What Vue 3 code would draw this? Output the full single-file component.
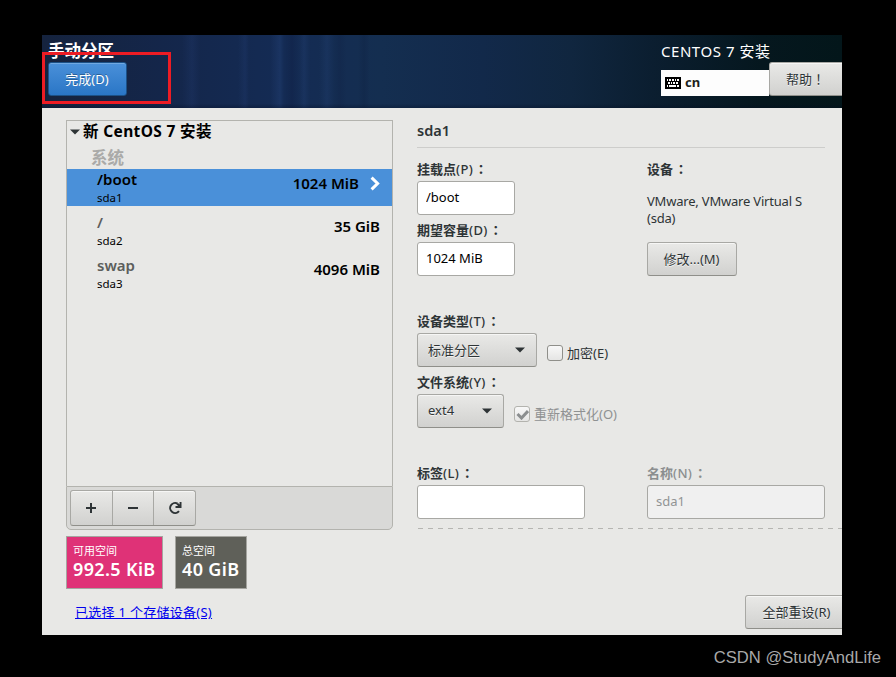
<script setup>
import { ref } from 'vue'

const partitions = [
  { mount: '/boot', device: 'sda1', size: '1024 MiB' },
  { mount: '/', device: 'sda2', size: '35 GiB' },
  { mount: 'swap', device: 'sda3', size: '4096 MiB' },
]

const selected = ref('sda1')
const mountPoint = ref('/boot')
const capacity = ref('1024 MiB')
const label = ref('')
const encrypt = ref(false)
</script>

<template>
  <div class="screen">
    <div class="window">
      <header class="header">
        <div class="header-left">
          <h1>手动分区</h1>
          <button class="btn primary" type="button">完成(D)</button>
        </div>
        <div class="header-right">
          <div class="product">CENTOS 7 安装</div>
          <div class="header-tools">
            <div class="keyboard">
              <svg width="16" height="12" viewBox="0 0 16 12" shape-rendering="crispEdges">
                <rect width="16" height="12" rx="1" fill="#000" />
                <path
                  d="M2 2h1v2h-1zM4 2h2v2h-2zM7 2h2v2h-2zM10 2h1v2h-1zM12 2h2v2h-2zM3 5h2v2h-2zM6 5h1v2h-1zM8 5h2v2h-2zM11 5h2v2h-2zM2 8h1v2h-1zM4 8h7v2h-7zM12 8h2v2h-2z"
                  fill="#fff"
                />
              </svg>
              <span>cn</span>
            </div>
            <button class="btn help" type="button">帮助<span class="wide">！</span></button>
          </div>
        </div>
        <!-- Highlight around the done button -->
        <div class="marker"></div>
      </header>

      <main class="body">
        <section class="left">
          <div class="tree">
            <div class="tree-title">
              <svg width="10" height="6" viewBox="0 0 10 6"><path d="M0 .5h10L5 5.5z" fill="#2e3436" /></svg>
              <span>新 CentOS 7 安装</span>
            </div>
            <div class="group">系统</div>
            <div
              v-for="p in partitions"
              :key="p.device"
              class="row"
              :class="{ active: p.device === selected }"
              @click="selected = p.device"
            >
              <div class="row-name">
                <strong>{{ p.mount }}</strong>
                <small>{{ p.device }}</small>
              </div>
              <div class="row-size">{{ p.size }}</div>
              <svg v-if="p.device === selected" class="chevron" width="10" height="15" viewBox="0 0 10 15">
                <path d="M1.6 1.6L7.6 7.5L1.6 13.4" fill="none" stroke="#fff" stroke-width="3" />
              </svg>
            </div>
          </div>
          <div class="toolbar">
            <div class="tool-group">
              <button type="button" aria-label="添加">
                <svg width="12" height="12" viewBox="0 0 12 12"><path d="M1 6h10M6 1v10" stroke="#2e3436" stroke-width="2" /></svg>
              </button>
              <button type="button" aria-label="删除">
                <svg width="12" height="12" viewBox="0 0 12 12"><path d="M1 6h10" stroke="#2e3436" stroke-width="2" /></svg>
              </button>
              <button type="button" aria-label="刷新">
                <svg width="14" height="14" viewBox="0 0 14 14">
                  <path d="M9.6 2.6A5 5 0 1 0 11 10.2" fill="none" stroke="#2e3436" stroke-width="2" />
                  <path d="M13.5 1v6H7.5V5h2.6L8.6 3.4 10 2l1.6 1.5V1z" fill="#2e3436" />
                </svg>
              </button>
            </div>
          </div>

          <div class="spaces">
            <div class="space available">
              <span>可用空间</span>
              <strong>992.5 KiB</strong>
            </div>
            <div class="space total">
              <span>总空间</span>
              <strong>40 GiB</strong>
            </div>
          </div>
          <a class="storage">已选择 1 个存储设备(S)</a>
        </section>

        <section class="right">
          <h2>sda1</h2>
          <div class="details">
            <div class="col main-col">
              <label>挂载点<i>(P)</i><span class="wide">：</span></label>
              <input v-model="mountPoint" class="w98" type="text" />
              <label>期望容量<i>(D)</i><span class="wide">：</span></label>
              <input v-model="capacity" class="w98" type="text" />
              <label class="spaced">设备类型<i>(T)</i><span class="wide">：</span></label>
              <div class="line">
                <button class="btn combo w120" type="button">
                  <span>标准分区</span>
                  <svg width="10" height="6" viewBox="0 0 10 6"><path d="M0 .5h10L5 5.5z" fill="#2e3436" /></svg>
                </button>
                <div class="check" @click="encrypt = !encrypt">
                  <span class="box">
                    <svg v-if="encrypt" width="13" height="11" viewBox="0 0 13 11"><path d="M1.5 5l4 4L12 2" fill="none" stroke="#2e3436" stroke-width="3" /></svg>
                  </span>
                  <span class="check-text">加密(E)</span>
                </div>
              </div>
              <label>文件系统<i>(Y)</i><span class="wide">：</span></label>
              <div class="line">
                <button class="btn combo w87" type="button">
                  <span>ext4</span>
                  <svg width="10" height="6" viewBox="0 0 10 6"><path d="M0 .5h10L5 5.5z" fill="#2e3436" /></svg>
                </button>
                <div class="check disabled">
                  <span class="box">
                    <svg width="13" height="11" viewBox="0 0 13 11"><path d="M1.5 5l4 4L12 2" fill="none" stroke="#8b8e8f" stroke-width="3" /></svg>
                  </span>
                  <span class="check-text">重新格式化(O)</span>
                </div>
              </div>
              <label class="spaced">标签<i>(L)</i><span class="wide">：</span></label>
              <input v-model="label" class="w168" type="text" />
            </div>
            <div class="col">
              <label>设备<span class="wide">：</span></label>
              <p class="device">VMware, VMware Virtual S<br />(sda)</p>
              <button class="btn w90" type="button">修改...(M)</button>
              <label class="name-label">名称<i>(N)</i><span class="wide">：</span></label>
              <input class="w178" type="text" value="sda1" disabled />
            </div>
          </div>
          <div class="dashes"></div>
          <button class="btn reset" type="button">全部重设(R)</button>
        </section>
      </main>
    </div>
    <footer class="credit">CSDN @StudyAndLife</footer>
  </div>
</template>

<style>
body {
  margin: 0;
  background: #000;
}
</style>

<style scoped>
* {
  box-sizing: border-box;
}

.screen {
  width: 896px;
  height: 677px;
  padding: 35px 0 0 42px;
  background: #000;
  overflow: hidden;
  font-family: "Noto Sans", "Noto Sans CJK SC", sans-serif;
  font-size: 13px;
  color: #2e3436;
  white-space: nowrap;
}

.window {
  width: 800px;
  height: 600px;
  overflow: hidden;
  background: #e8e8e6;
}

h1,
h2,
p {
  margin: 0;
}

button,
input {
  font: inherit;
  color: inherit;
  margin: 0;
}

.wide {
  font-family: "Noto Sans CJK TC", sans-serif;
}

.header {
  position: relative;
  display: flex;
  justify-content: space-between;
  height: 73px;
  background:
    linear-gradient(180deg, transparent 94%, rgba(0, 10, 30, 0.3)),
    linear-gradient(90deg, transparent 140px, rgba(50, 80, 150, 0.14) 150px, transparent 158px, transparent 196px, rgba(50, 80, 150, 0.14) 203px, transparent 207px, transparent 228px, rgba(60, 100, 170, 0.16) 238px, transparent 242px, rgba(0, 0, 30, 0.12) 250px, transparent 257px, rgba(60, 100, 170, 0.12) 262px, transparent 268px, transparent 277px, rgba(60, 100, 170, 0.12) 285px, transparent 292px, rgba(0, 0, 30, 0.08) 298px, transparent 305px, transparent 316px, rgba(0, 0, 30, 0.1) 322px, transparent 328px),
    linear-gradient(90deg, #15233e 0, #14264a 120px, #142b54 240px, #142e50 340px, #12294a 440px, #10263f 530px, #0b1e30 610px, #05171e 720px, #03161a 800px);
}

.header-left {
  padding: 5px 0 0 6px;
}

h1 {
  height: 22px;
  line-height: 22px;
  font-size: 16.5px;
  font-weight: 700;
  color: #fff;
}

.header-right {
  width: 181px;
  padding-top: 5px;
}

.product {
  height: 22px;
  line-height: 22px;
  font-size: 15px;
  letter-spacing: 0.55px;
  color: #fff;
}

.header-tools {
  display: flex;
  align-items: flex-end;
}

.keyboard {
  display: flex;
  align-items: center;
  gap: 4px;
  width: 108px;
  height: 26px;
  padding-left: 4px;
  background: #fdfdfd;
  color: #1c1f20;
  font-weight: 700;
}

.keyboard span {
  padding-bottom: 2px;
}

.marker {
  position: absolute;
  left: 0;
  top: 17px;
  width: 129px;
  height: 52px;
  border: 3px solid #ed1c24;
}

.btn {
  display: flex;
  align-items: center;
  justify-content: center;
  height: 34px;
  padding: 0 1px 2px 0;
  border: 1px solid #a8a8a4;
  border-bottom-color: #8f8f8a;
  border-radius: 3px;
  background: linear-gradient(#e9e9e7, #d1d1cf);
  box-shadow: inset 0 1px #f6f6f5;
  text-shadow: 0 1px rgba(255, 255, 255, 0.7);
}

.btn.primary {
  width: 79px;
  border-color: #1c5187;
  background: linear-gradient(#4a90d9, #2a76c6);
  box-shadow: inset 0 1px #70a8e1;
  color: #fff;
  text-shadow: 0 -1px rgba(0, 0, 0, 0.3);
}

.btn.help {
  width: 76px;
  margin-right: -3px;
  padding-right: 3px;
}

.body {
  display: flex;
  height: 527px;
  padding: 12px 0 0 24px;
}

.left {
  width: 327px;
}

.tree {
  height: 366px;
  border: 1px solid #b3b3ae;
  border-bottom: none;
  color: #000;
}

.tree-title {
  display: flex;
  align-items: center;
  gap: 3px;
  height: 21px;
  padding-left: 3px;
  font-size: 15.5px;
  font-weight: 700;
  letter-spacing: 0.35px;
}

.tree-title span {
  line-height: 20px;
  padding-bottom: 2px;
}

.group {
  height: 27px;
  padding: 4px 0 0 24px;
  line-height: 24px;
  font-size: 16.5px;
  font-weight: 700;
  color: #aaaaa8;
}

.row {
  display: flex;
  height: 37px;
  margin-bottom: 6px;
  padding: 0 12px 0 30px;
}

.row-name {
  flex: 1;
  display: flex;
  flex-direction: column;
}

.row-name strong {
  height: 21px;
  line-height: 20px;
  font-size: 15px;
  font-weight: 600;
  color: #5c5e5c;
}

.row-name small {
  line-height: 16px;
  font-size: 11.5px;
}

.row-size {
  line-height: 29px;
  font-size: 15px;
  font-weight: 600;
}

.row.active {
  background: #4a90d9;
}

.active .row-name strong {
  color: #000;
}

.chevron {
  margin: 7px 0 0 11px;
}

.toolbar {
  height: 44px;
  padding: 3px;
  border: 1px solid #b3b3ae;
  border-radius: 0 0 5px 5px;
  background: #d9d9d7;
}

.tool-group {
  display: flex;
  width: 126px;
  height: 36px;
  border: 1px solid #a8a8a4;
  border-bottom-color: #8f8f8a;
  border-radius: 3px;
  background: linear-gradient(#e9e9e7, #d1d1cf);
  box-shadow: inset 0 1px #f6f6f5;
}

.tool-group button {
  display: flex;
  flex: 1;
  align-items: center;
  justify-content: center;
  padding: 0;
  border: none;
  background: none;
}

.tool-group button + button {
  border-left: 1px solid #a8a8a4;
}

.spaces {
  display: flex;
  gap: 12px;
  margin-top: 6px;
}

.space {
  display: flex;
  flex-direction: column;
  height: 53px;
  padding: 5px 0 0 6px;
  border: 1px solid #a5a5a0;
  color: #fff;
}

.space span {
  height: 17px;
  line-height: 17px;
  font-size: 11px;
}

.space strong {
  line-height: 20px;
  font-size: 18px;
  font-weight: 600;
  letter-spacing: 0.35px;
}

.available {
  width: 97px;
  background: #df3277;
}

.total {
  width: 72px;
  background: #5f6059;
}

.storage {
  display: block;
  margin: 12px 0 0 9px;
  line-height: 22px;
  letter-spacing: 0.28px;
  color: #0000ee;
  text-decoration: underline;
}

.right {
  width: 425px;
  margin-left: 24px;
}

h2 {
  width: 408px;
  height: 28px;
  line-height: 20px;
  font-size: 14.5px;
  font-weight: 600;
  border-bottom: 1px solid #cdcdcb;
}

.details {
  display: flex;
  padding-top: 10px;
}

.main-col {
  width: 230px;
}

.col label {
  display: block;
  height: 27px;
  line-height: 21px;
  font-weight: 700;
}

.col label:first-child {
  height: 23px;
}

.col label i {
  font-style: normal;
  font-weight: 500;
  letter-spacing: 0.35px;
}

.col label .wide {
  margin-left: 1.5px;
}

.main-col label:not(:first-child) {
  padding-top: 4px;
}

.main-col label.spaced {
  height: 57px;
  padding-top: 34px;
}

input {
  display: block;
  height: 34px;
  padding: 0 8px 3px;
  border: 1px solid #a8a8a4;
  border-radius: 3px;
  background: #fff;
  color: #000;
}

input:disabled {
  background: #f0f0f0;
  color: #919494;
}

.w98 { width: 98px; }
.w120 { width: 120px; }
.w87 { width: 87px; }
.w168 { width: 168px; }
.w90 { width: 90px; }
.w178 { width: 178px; }

.line {
  display: flex;
  gap: 10px;
}

.combo {
  justify-content: space-between;
  padding: 0 11px 0 10px;
}

.combo span {
  padding-bottom: 2px;
}

.check {
  display: flex;
  align-items: center;
  gap: 4px;
  padding-top: 6px;
}

.check-text {
  padding-bottom: 2px;
}

.box {
  display: flex;
  align-items: center;
  justify-content: center;
  width: 16px;
  height: 16px;
  border: 1px solid #8f8f8a;
  border-radius: 3px;
  background: linear-gradient(#f8f8f8, #e5e5e4);
}

.check.disabled {
  color: #8f9192;
}

.disabled .box {
  border-color: #b3b3ae;
}

.device {
  height: 61px;
  padding-top: 12px;
  line-height: 17px;
  letter-spacing: -0.2px;
}

.col label.name-label {
  height: 209px;
  padding-top: 186px;
  color: #8b8e8f;
}

.dashes {
  height: 1px;
  margin: 9px 0 0 1px;
  background: repeating-linear-gradient(90deg, #b5b5b2 0 5px, transparent 5px 10px);
}

.reset {
  width: 104px;
  margin: 66px 0 0 328px;
}

.credit {
  height: 42px;
  padding-right: 15px;
  line-height: 45px;
  text-align: right;
  font-family: "Liberation Sans", sans-serif;
  font-size: 16.6px;
  color: #a9a9a9;
}
</style>
